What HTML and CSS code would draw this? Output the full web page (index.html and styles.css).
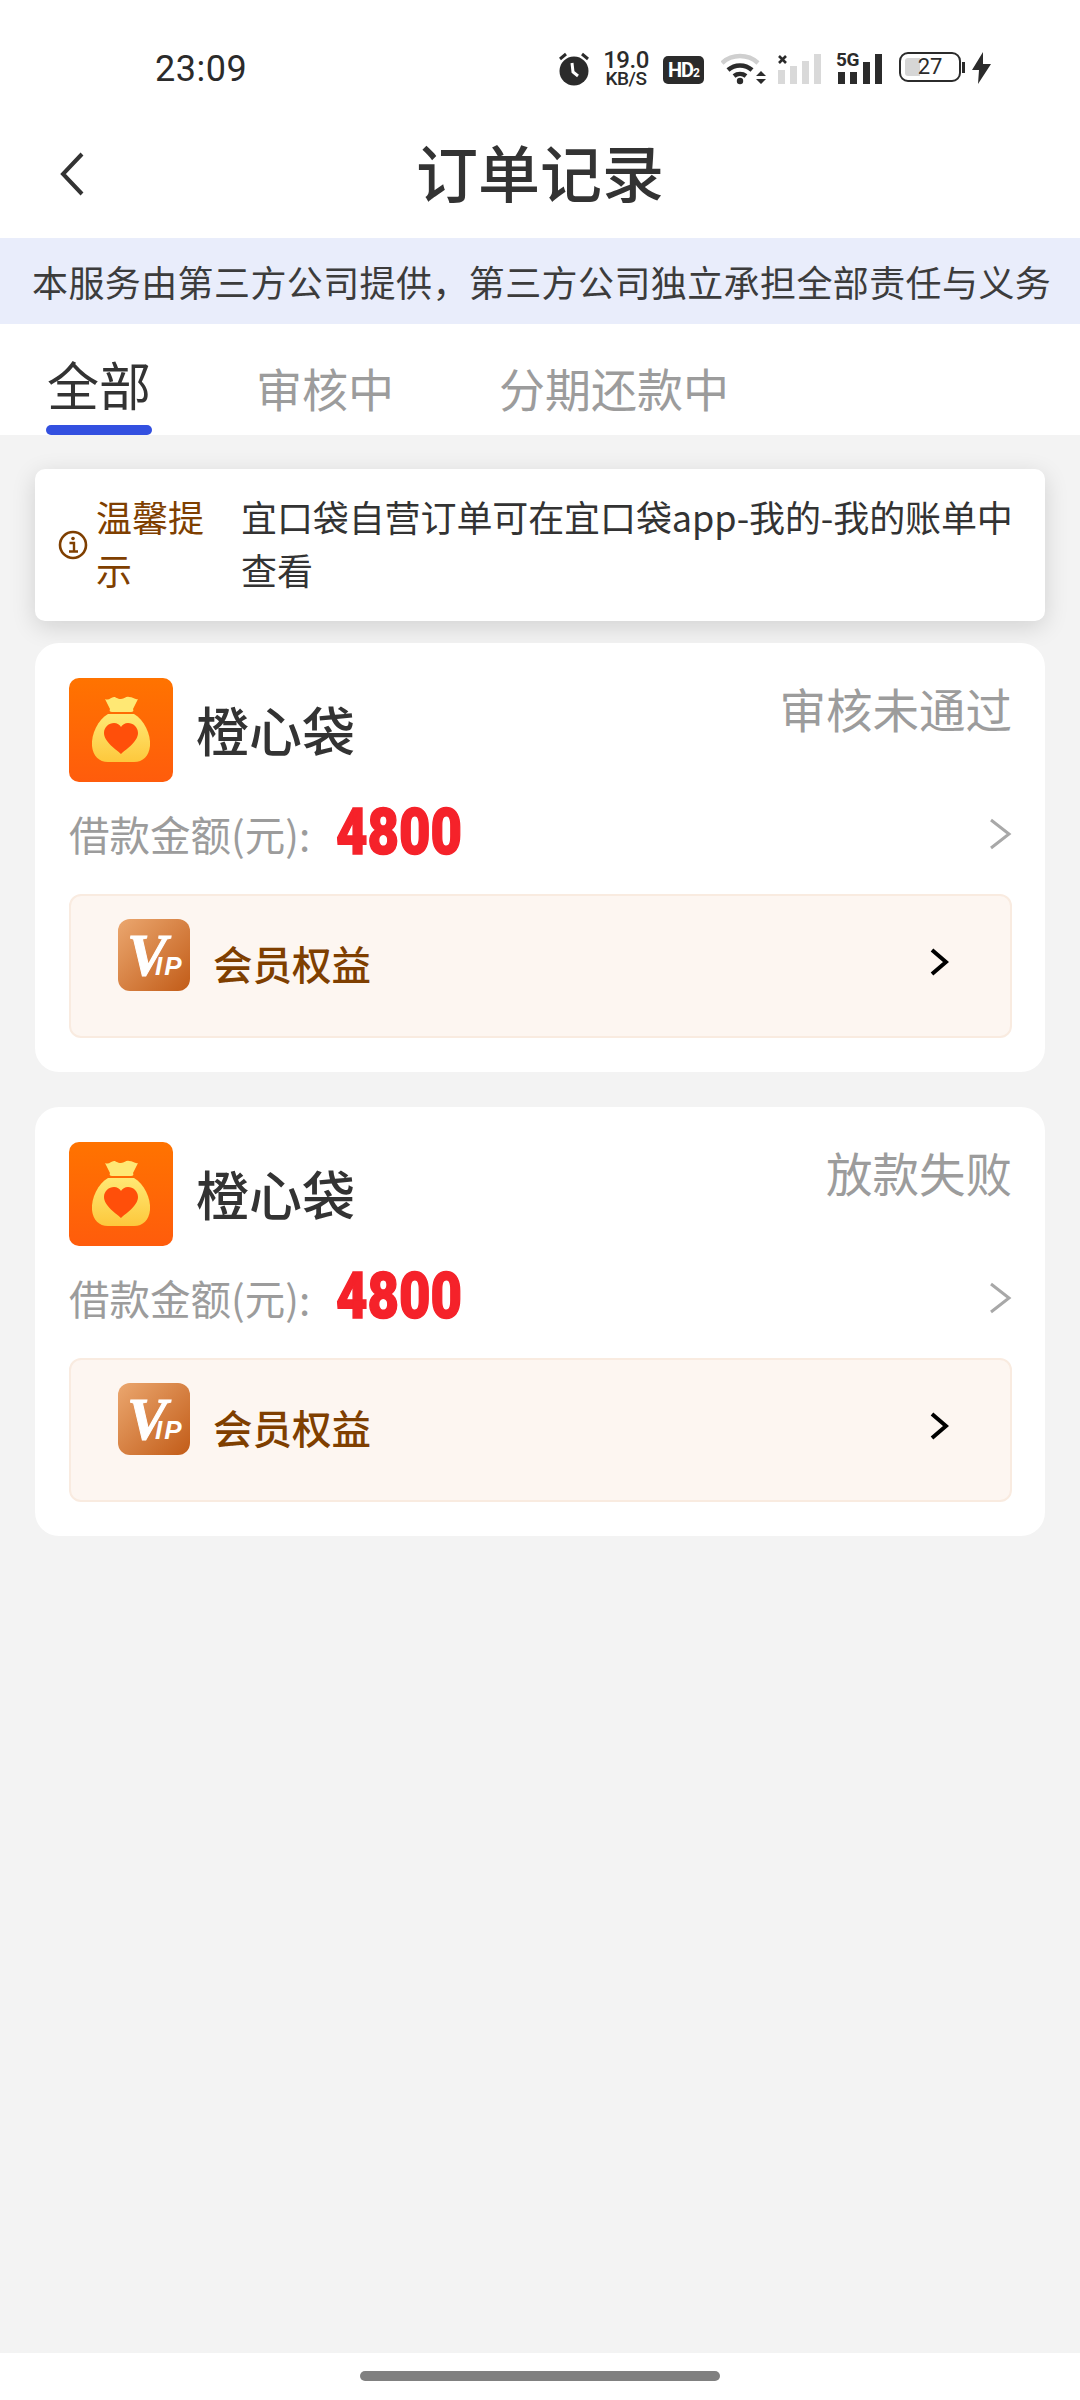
FILE: index.html
```html
<!DOCTYPE html>
<html lang="zh-CN">
<head>
    <meta charset="UTF-8">
    <meta name="viewport" content="width=device-width, initial-scale=1.0">
    <title>订单记录</title>
    <link rel="stylesheet" href="styles.css">
</head>
<body>

<div class="status-bar">
    <span class="clock">23:09</span>
    <div class="status-icons">
        <svg class="ic-alarm" width="34" height="34" viewBox="0 0 34 34">
            <circle cx="17" cy="19" r="14.5" fill="#2b2b2b"/>
            <path d="M3 7l6-5M31 7l-6-5" stroke="#2b2b2b" stroke-width="3" fill="none"/>
            <path d="M15 11l1 9 5 4" stroke="#fff" stroke-width="3" fill="none"/>
        </svg>
        <div class="net-speed">19.0<br><small>KB/S</small></div>
        <span class="hd-badge">HD<small>2</small></span>
        <svg class="ic-wifi" width="46" height="34" viewBox="0 0 46 34">
            <path d="M1 11a27 27 0 0 1 36 0" stroke="#cfcfcf" stroke-width="4.5" fill="none"/>
            <path d="M7 18a18 18 0 0 1 24 0" stroke="#2b2b2b" stroke-width="4.5" fill="none"/>
            <path d="M13 24a10 10 0 0 1 12 0" stroke="#2b2b2b" stroke-width="4.5" fill="none"/>
            <circle cx="19" cy="29" r="3.2" fill="#2b2b2b"/>
            <path d="M35 24l5-5 5 5zM35 27l5 5 5-5z" fill="#2b2b2b"/>
        </svg>
        <svg class="ic-signal" width="44" height="34" viewBox="0 0 44 34">
            <path d="M2 4l7 7M9 4l-7 7" stroke="#2b2b2b" stroke-width="2.6"/>
            <rect x="1" y="18" width="7" height="14" fill="#d9d9d9"/>
            <rect x="13" y="14" width="7" height="18" fill="#d9d9d9"/>
            <rect x="25" y="9" width="7" height="23" fill="#d9d9d9"/>
            <rect x="37" y="2" width="7" height="30" fill="#d9d9d9"/>
        </svg>
        <div class="signal-5g">
            <span class="label-5g">5G</span>
            <svg width="47" height="34" viewBox="0 0 47 34">
                <rect x="1" y="20" width="7" height="12" fill="#2b2b2b"/>
                <rect x="13" y="20" width="7" height="12" fill="#2b2b2b"/>
                <rect x="26" y="10" width="7" height="22" fill="#2b2b2b"/>
                <rect x="38" y="2" width="7" height="30" fill="#2b2b2b"/>
            </svg>
        </div>
        <div class="battery">
            <div class="battery-fill"></div>
            <span class="battery-num">27</span>
        </div>
        <span class="battery-tip"></span>
        <svg class="ic-bolt" width="21" height="32" viewBox="0 0 21 32">
            <path d="M12 0L1 18h7l-1 14 13-20h-8z" fill="#2b2b2b"/>
        </svg>
    </div>
</div>

<div class="nav-bar">
    <svg class="nav-back" width="28" height="44" viewBox="0 0 28 44">
        <path d="M23 2L4 22l19 20" stroke="#333" stroke-width="4" fill="none"/>
    </svg>
    <h1 class="nav-title">订单记录</h1>
</div>

<div class="service-note">本服务由第三方公司提供，第三方公司独立承担全部责任与义务</div>

<div class="tabs">
    <div class="tab tab-active">全部</div>
    <div class="tab tab-review">审核中</div>
    <div class="tab tab-repay">分期还款中</div>
</div>

<div class="content">
    <div class="tip-card">
        <svg class="tip-icon" width="30" height="32" viewBox="0 0 30 32">
            <circle cx="15" cy="16" r="13" stroke="#7f3f00" stroke-width="2.6" fill="none"/>
            <circle cx="15" cy="9.5" r="1.8" fill="#7f3f00"/>
            <path d="M11.5 14h4.5v8M11 22.5h9" stroke="#7f3f00" stroke-width="2.4" fill="none"/>
        </svg>
        <div class="tip-label">温馨提示</div>
        <div class="tip-text">宜口袋自营订单可在宜口袋app-我的-我的账单中查看</div>
    </div>

    <div class="order-card">
        <div class="order-head">
            <svg class="brand-icon" width="104" height="104" viewBox="0 0 104 104">
                <defs>
                    <linearGradient id="bagBg" x1="0" y1="0" x2="0" y2="1">
                        <stop offset="0" stop-color="#ff7300"/>
                        <stop offset="1" stop-color="#ff5c0c"/>
                    </linearGradient>
                    <linearGradient id="bagFill" x1="0" y1="0" x2="0" y2="1">
                        <stop offset="0" stop-color="#ffe874"/>
                        <stop offset="1" stop-color="#fdc83c"/>
                    </linearGradient>
                </defs>
                <rect width="104" height="104" rx="10" fill="url(#bagBg)"/>
                <path d="M36 21c4 2 6-2 9-2 2 0 3 2 7 2s5-3 8-2c4 0 6 3 9 2l-5 10c1 2 0 3-2 3H43c-2 0-3-1-2-3z" fill="#ffe874"/>
                <path d="M39 36h26c10 6 17 20 16 32-1 10-7 16-16 16H39c-9 0-15-6-16-16-1-12 6-26 16-32z" fill="url(#bagFill)"/>
                <path d="M52 76c-4-4-17-12-17-21 0-6 5-10 10-10 3 0 6 2 7 4 1-2 4-4 7-4 5 0 10 4 10 10 0 9-13 17-17 21z" fill="#ff4f0a"/>
            </svg>
            <span class="brand-name">橙心袋</span>
            <span class="order-status">审核未通过</span>
        </div>
        <div class="loan-row">
            <span class="loan-label">借款金额(元):</span>
            <span class="loan-amount">4800</span>
            <svg class="loan-arrow" width="24" height="32" viewBox="0 0 24 32">
                <path d="M3 2l18 14L3 30" stroke="#a8a8a8" stroke-width="3" fill="none"/>
            </svg>
        </div>
        <div class="vip-row">
            <svg class="vip-icon" width="72" height="72" viewBox="0 0 72 72">
                <defs>
                    <linearGradient id="vipBg" x1="0" y1="0" x2="1" y2="1">
                        <stop offset="0" stop-color="#eba76f"/>
                        <stop offset="1" stop-color="#c25c18"/>
                    </linearGradient>
                </defs>
                <rect width="72" height="72" rx="12" fill="url(#vipBg)"/>
                <text x="9" y="56" class="vip-v">V<tspan class="vip-ip" dx="-12">IP</tspan></text>
            </svg>
            <span class="vip-name">会员权益</span>
            <svg class="vip-arrow" width="20" height="28" viewBox="0 0 20 28">
                <path d="M3 2l14 12L3 26" stroke="#000" stroke-width="4" fill="none"/>
            </svg>
        </div>
    </div>

    <div class="order-card">
        <div class="order-head">
            <svg class="brand-icon" width="104" height="104" viewBox="0 0 104 104">
                <rect width="104" height="104" rx="10" fill="url(#bagBg)"/>
                <path d="M36 21c4 2 6-2 9-2 2 0 3 2 7 2s5-3 8-2c4 0 6 3 9 2l-5 10c1 2 0 3-2 3H43c-2 0-3-1-2-3z" fill="#ffe874"/>
                <path d="M39 36h26c10 6 17 20 16 32-1 10-7 16-16 16H39c-9 0-15-6-16-16-1-12 6-26 16-32z" fill="url(#bagFill)"/>
                <path d="M52 76c-4-4-17-12-17-21 0-6 5-10 10-10 3 0 6 2 7 4 1-2 4-4 7-4 5 0 10 4 10 10 0 9-13 17-17 21z" fill="#ff4f0a"/>
            </svg>
            <span class="brand-name">橙心袋</span>
            <span class="order-status">放款失败</span>
        </div>
        <div class="loan-row">
            <span class="loan-label">借款金额(元):</span>
            <span class="loan-amount">4800</span>
            <svg class="loan-arrow" width="24" height="32" viewBox="0 0 24 32">
                <path d="M3 2l18 14L3 30" stroke="#a8a8a8" stroke-width="3" fill="none"/>
            </svg>
        </div>
        <div class="vip-row">
            <svg class="vip-icon" width="72" height="72" viewBox="0 0 72 72">
                <rect width="72" height="72" rx="12" fill="url(#vipBg)"/>
                <text x="9" y="56" class="vip-v">V<tspan class="vip-ip" dx="-12">IP</tspan></text>
            </svg>
            <span class="vip-name">会员权益</span>
            <svg class="vip-arrow" width="20" height="28" viewBox="0 0 20 28">
                <path d="M3 2l14 12L3 26" stroke="#000" stroke-width="4" fill="none"/>
            </svg>
        </div>
    </div>
</div>

<div class="home-area">
    <div class="home-bar"></div>
</div>

</body>
</html>
```

FILE: styles.css
```css
:root {
    --brown: #7f3f00;
    --dark: #333333;
    --gray: #9c9c9c;
    --page-bg: #f3f3f3;
}

* {
    box-sizing: border-box;
}

body {
    font-family: "Noto Sans CJK SC", "Noto Sans", sans-serif;
    margin: 0;
    width: 1080px;
    min-height: 2400px;
    display: flex;
    flex-direction: column;
    background-color: white;
    color: var(--dark);
}

/* top status bar */
.status-bar {
    height: 118px;
    padding: 50px 88px 0 155px;
    display: flex;
    justify-content: space-between;
    align-items: flex-start;
    color: #2b2b2b;
}

.clock {
    font-family: Roboto, sans-serif;
    font-size: 36px;
    line-height: 38px;
    letter-spacing: 0.5px;
}

.status-icons {
    display: flex;
    align-items: flex-start;
    height: 36px;
    margin-top: 2px;
}

.net-speed {
    width: 46px;
    margin-left: 12px;
    font-family: Roboto, sans-serif;
    font-size: 24px;
    font-weight: 500;
    line-height: 17px;
    letter-spacing: -0.5px;
    text-align: center;
}

.net-speed small {
    font-size: 19px;
}

.hd-badge {
    width: 41px;
    height: 28px;
    margin: 4px 0 0 14px;
    border-radius: 5px;
    background-color: #2b2b2b;
    color: white;
    font-family: Roboto, sans-serif;
    font-size: 20px;
    font-weight: 700;
    line-height: 28px;
    text-align: center;
    letter-spacing: -1px;
}

.hd-badge small {
    font-size: 12px;
}

.ic-wifi {
    margin-left: 17px;
}

.ic-signal {
    margin-left: 10px;
}

.signal-5g {
    position: relative;
    margin-left: 16px;
    width: 47px;
}

.label-5g {
    position: absolute;
    left: -1px;
    top: -2px;
    font-family: Roboto, sans-serif;
    font-size: 19px;
    font-weight: 700;
    line-height: 20px;
    letter-spacing: -0.5px;
}

.battery {
    position: relative;
    width: 62px;
    height: 30px;
    margin-left: 15px;
    padding: 4px;
    border: 2.5px solid #2b2b2b;
    border-radius: 9px;
}

.battery-fill {
    width: 15px;
    height: 100%;
    background-color: #d6d6d6;
    border-radius: 3px 0 0 3px;
}

.battery-num {
    position: absolute;
    left: 0;
    right: 0;
    top: 0;
    font-family: Roboto, sans-serif;
    font-size: 22px;
    line-height: 25px;
    text-align: center;
}

.battery-tip {
    width: 3px;
    height: 11px;
    margin: 10px 0 0 1px;
    background-color: #2b2b2b;
}

.ic-bolt {
    margin-left: 6px;
}

/* title bar */
.nav-bar {
    position: relative;
    height: 120px;
    display: flex;
    justify-content: center;
    align-items: flex-start;
}

.nav-back {
    position: absolute;
    left: 59px;
    top: 34px;
}

.nav-title {
    margin: 13px 0 0;
    font-size: 62px;
    font-weight: 500;
    line-height: 80px;
    color: var(--dark);
}

.service-note {
    height: 86px;
    background-color: #e9edfb;
    font-size: 36px;
    line-height: 86px;
    letter-spacing: 0.4px;
    padding-left: 32px;
    white-space: nowrap;
    color: #3c3c3c;
}

/* tabs */
.tabs {
    height: 111px;
    padding-left: 46px;
    display: flex;
    align-items: flex-start;
    font-size: 46px;
    color: var(--gray);
}

.tab {
    line-height: 64px;
    margin-top: 31px;
}

.tab-active {
    position: relative;
    width: 106px;
    margin-top: 24px;
    font-size: 52px;
    line-height: 72px;
    text-align: center;
    color: var(--dark);
}

.tab-active::after {
    content: "";
    position: absolute;
    left: 0;
    right: 0;
    top: 77px;
    height: 10px;
    border-radius: 5px;
    background-color: #3350e0;
}

.tab-review {
    margin-left: 104px;
}

.tab-repay {
    margin-left: 105px;
}

.content {
    flex: 1;
    padding: 34px 35px 0;
    background-color: var(--page-bg);
}

/* notice card */
.tip-card {
    display: flex;
    align-items: center;
    height: 152px;
    padding-left: 23px;
    background-color: white;
    border-radius: 10px;
    box-shadow: 0 6px 24px rgba(0, 0, 0, .14);
}

.tip-icon {
    flex: none;
}

.tip-label {
    flex: none;
    width: 112px;
    margin: 0 0 5px 8px;
    font-size: 36px;
    line-height: 53px;
    color: var(--brown);
}

.tip-text {
    margin: 0 0 5px 33px;
    width: 780px;
    font-size: 36px;
    line-height: 53px;
    letter-spacing: -0.1px;
}

/* order cards */
.order-card {
    margin: 22px 0 35px;
    padding: 35px 33px 34px 34px;
    background-color: white;
    border-radius: 24px;
}

.order-head {
    display: flex;
    align-items: center;
    height: 104px;
}

.brand-icon {
    flex: none;
}

.brand-name {
    margin: -2px 0 0 23px;
    font-size: 53px;
    font-weight: 500;
    line-height: 70px;
}

.order-status {
    margin-left: auto;
    align-self: flex-start;
    margin-top: -3px;
    font-size: 46.5px;
    line-height: 66px;
    color: var(--gray);
}

.loan-row {
    display: flex;
    align-items: center;
    height: 56px;
    margin-top: 25px;
}

.loan-label {
    margin-top: -3px;
    font-size: 40.5px;
    line-height: 56px;
    color: var(--gray);
}

.loan-amount {
    display: inline-block;
    margin: -4px 0 0 26px;
    font-family: Roboto, sans-serif;
    font-size: 64px;
    font-weight: 900;
    line-height: 56px;
    color: #f5222a;
    -webkit-text-stroke: 1.5px #f5222a;
    transform: scaleX(.85);
    transform-origin: left center;
}

.loan-arrow {
    margin: -2px 0 0 auto;
}

.vip-row {
    display: flex;
    align-items: flex-start;
    height: 144px;
    margin-top: 31px;
    padding: 23px 61px 0 47px;
    background-color: #fdf6f1;
    border: 2px solid #f9ebe0;
    border-radius: 12px;
}

.vip-icon {
    flex: none;
}

.vip-v {
    font-family: "Liberation Serif", serif;
    font-size: 60px;
    font-weight: 700;
    font-style: italic;
    fill: white;
    stroke: white;
    stroke-width: 1px;
}

.vip-ip {
    font-family: "Liberation Sans", sans-serif;
    font-size: 26px;
    letter-spacing: 2px;
    stroke-width: 0;
}

.vip-name {
    margin: 16px 0 0 23px;
    font-size: 39.5px;
    font-weight: 500;
    line-height: 56px;
    color: var(--brown);
}

.vip-arrow {
    margin: 29px 0 0 auto;
}

/* gesture bar */
.home-area {
    height: 47px;
    padding-top: 18px;
    background-color: white;
}

.home-bar {
    width: 360px;
    height: 10px;
    margin: 0 auto;
    border-radius: 5px;
    background-color: #808080;
}
```
